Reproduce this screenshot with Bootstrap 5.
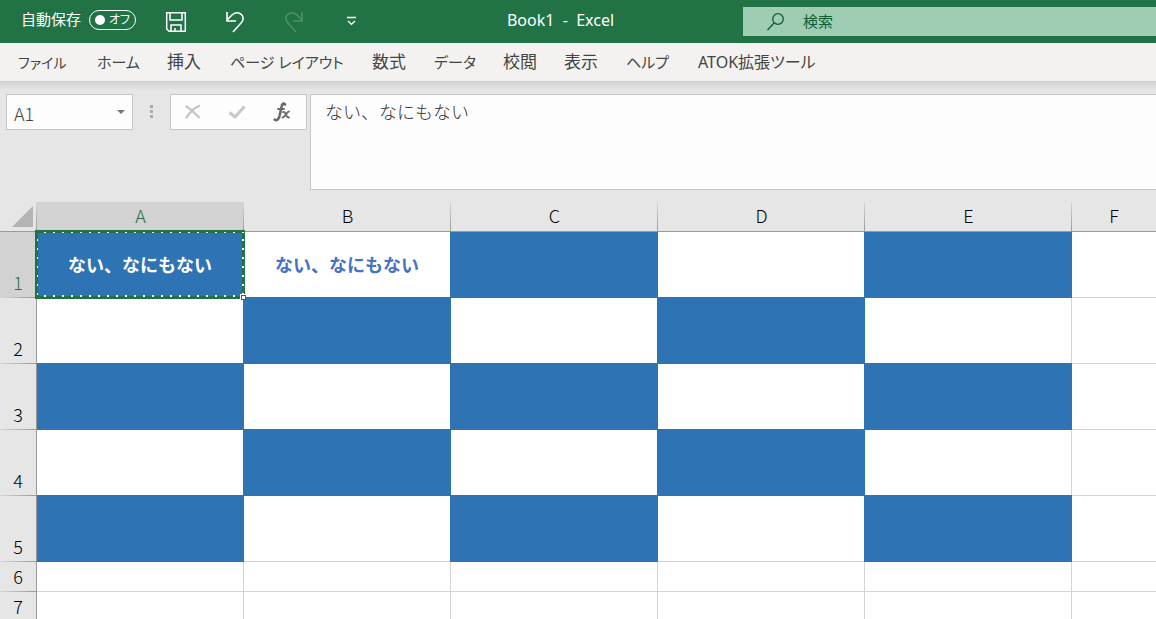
<!DOCTYPE html>
<html lang="ja">
<head>
<meta charset="utf-8">
<meta name="viewport" content="width=device-width, initial-scale=1">
<title>Book1 - Excel</title>
<link href="https://cdn.jsdelivr.net/npm/bootstrap@5.3.0/dist/css/bootstrap.min.css" rel="stylesheet">
<style>
  :root { --xl-green: #217346; --xl-fill: #2e74b5; --xl-chrome: #e6e6e6; --xl-line: #c6c6c6; --xl-edge: #999; }
  body { font-family: "Noto Sans", "Noto Sans CJK JP", sans-serif; background: var(--xl-chrome); color: #444; }
  .titlebar { height: 43px; background: var(--xl-green); color: #fff; font-size: 15px; }
  .autosave { width: 146px; padding-left: 21px; gap: 8px; }
  .autosave .switch-track { width: 47px; height: 20px; border: 1px solid #fff; border-radius: 10px; font-size: 12px; padding: 0 5px; font-feature-settings: "palt"; cursor: pointer; }
  .switch-knob { width: 10px; height: 10px; border-radius: 50%; background: #fff; }
  .quick button { width: 59px; height: 40px; }
  .doc-title { white-space: pre; font-size: 16px; }
  .search { width: 413px; height: 29px; background: #9fcdb3; color: #0e5c2f; }
  .search input { background: transparent; color: inherit; font-size: 15px; font-family: inherit; outline: 0; }
  .search input::placeholder { color: inherit; opacity: 1; }
  .ribbon { height: 38px; background: #f3f2f1; padding-left: 18px; display: grid; grid-template-columns: 79px 70px 63px 142px 62px 69px 61px 62px 72px auto; align-items: center; font-size: 17px; }
  .ribbon a { color: #444; text-decoration: none; white-space: nowrap; font-feature-settings: "palt"; }
  .ribbon .kana { font-size: 15px; }
  .ribbon .kana-small { font-size: 14px; }
  .ribbon .mixed { font-size: 16px; }
  .formula { height: 121px; padding: 13px 0 12px 6px; background: linear-gradient(#cecece, var(--xl-chrome) 9px); }
  .formula > * { border: 1px solid var(--xl-line); background: #fdfdfd; }
  .name-box { width: 127px; height: 36px; }
  .name-box input { font-size: 18px; font-weight: 300; padding: 3px 0 0 7px; color: #444; font-family: "Noto Sans CJK JP", sans-serif; outline: 0; background: transparent; }
  .name-box button { width: 22px; }
  .formula .grip { width: 37px; height: 36px; border: 0; background: transparent; }
  .fx-box { width: 137px; height: 36px; margin-right: 3px; padding: 0 2px 3px 0; }
  .formula textarea { height: 96px; border-right: 0; padding: 3px 14px; font: 300 18px/26px "Noto Sans CJK JP", sans-serif; color: #333; resize: none; outline: 0; }
  .sheet { table-layout: fixed; width: 100%; border-collapse: separate; border-spacing: 0; font-family: "Noto Sans CJK JP", sans-serif; background: #fff; }
  .sheet th, .sheet td { padding: 0; text-align: center; }
  .sheet th { position: relative; z-index: 1; font-weight: 300; font-size: 18px; line-height: 24px; color: #000; background: var(--xl-chrome); }
  .sheet thead th { height: 30px; padding-bottom: 4px; border-bottom: 1px solid var(--xl-edge); background: linear-gradient(#d6d6d6, var(--xl-edge)) right / 1px 100% no-repeat var(--xl-chrome); }
  .sheet tbody th { height: 66px; border-right: 1px solid var(--xl-edge); vertical-align: bottom; padding-bottom: 4px; background: linear-gradient(90deg, #d6d6d6, var(--xl-edge)) bottom / 100% 1px no-repeat var(--xl-chrome); }
  .sheet thead th:first-child { padding-bottom: 0; }
  .sheet tbody .short th { height: 30px; }
  .sheet tbody .picked, .sheet thead .picked { background-color: #d2d2d2; color: var(--xl-green); }
  .sheet td { border-right: 1px solid #d4d4d4; border-bottom: 1px solid #d4d4d4; font-size: 18px; font-weight: 700; color: #4472c4; white-space: nowrap; }
  .sheet td:last-child { border-right: 0; }
  .sheet thead th:last-child { background: var(--xl-chrome); }
  .sheet td.filled { background: var(--xl-fill); border-color: var(--xl-fill); box-shadow: -1px -1px var(--xl-fill), -1px 0 var(--xl-fill), 0 -1px var(--xl-fill); }
  .sheet .active-cell { position: relative; z-index: 2; color: #fff; }
  .ants { position: absolute; inset: -2px; border: 3px solid var(--xl-green); pointer-events: none; }
  .ants::before { content: ""; position: absolute; inset: -1px -2px -1px -1px;
    background:
      repeating-linear-gradient(90deg, transparent 0 7px, #fff 7px 9px) top / 100% 1px no-repeat,
      repeating-linear-gradient(90deg, transparent 0 7px, #fff 7px 9px) bottom / 100% 2px no-repeat,
      repeating-linear-gradient(transparent 0 7px, #fff 7px 9px) left / 1px 100% no-repeat,
      repeating-linear-gradient(transparent 0 7px, #fff 7px 9px) right / 2px 100% no-repeat; }
  .ants::after { content: ""; position: absolute; right: -4px; bottom: -4px; width: 5px; height: 5px; background: #fff; border: 1px solid var(--xl-green); box-shadow: -1px -1px #fff; }
</style>
</head>
<body class="vh-100 overflow-hidden">
<header>
  <div class="titlebar d-flex align-items-center">
    <div class="autosave d-flex align-items-center flex-shrink-0 pb-1">
      <label for="autosave" class="text-nowrap">自動保存</label>
      <input type="checkbox" id="autosave" class="visually-hidden">
      <label for="autosave" class="switch-track d-flex align-items-center justify-content-between"><span class="switch-knob"></span>オフ</label>
    </div>
    <div class="quick d-flex flex-shrink-0">
      <button class="btn p-0 border-0" aria-label="上書き保存"><svg width="22" height="22" viewBox="0 0 22 22" fill="none" stroke="#fff" stroke-width="1.5"><path d="M1.7.7h18.6v18.6H4L1.7 17zM5 1v7h12V1M6 19v-6h10v6M10 19v-3"/></svg></button>
      <button class="btn p-0 border-0" aria-label="元に戻す"><svg width="20" height="22" viewBox="0 0 20 22" fill="none" stroke="#fff" stroke-width="1.6"><path d="M2 0v9h9M2 8l5-5c7-6 15 2 9 8l-8 9"/></svg></button>
      <button class="btn p-0 border-0" aria-label="やり直し"><svg width="20" height="22" viewBox="0 0 20 22" fill="none" stroke="#4d9068" stroke-width="1.6"><path d="M18 0v9H9M18 8l-5-5C6-3-2 5 4 11l8 9"/></svg></button>
      <button class="btn p-0 border-0" aria-label="カスタマイズ"><svg width="12" height="14" viewBox="0 0 12 14" fill="none" stroke="#fff" stroke-width="1.300"><path d="M0 1.500h9M1 5l3.500 3.300L8 5"/></svg></button>
    </div>
    <div class="doc-title flex-grow-1 text-center pb-1 pe-1">Book1  -  Excel</div>
    <div class="search d-flex align-items-center flex-shrink-0">
      <svg class="ms-4 me-3 flex-shrink-0" width="18" height="18" viewBox="0 0 18 18" fill="none" stroke="#0e5c2f" stroke-width="1.3"><circle cx="11" cy="6" r="5.300"/><path d="M7 10 .500 17"/></svg>
      <input class="border-0 flex-grow-1" type="search" placeholder="検索" aria-label="検索">
    </div>
  </div>
  <nav class="ribbon" aria-label="リボン">
    <a href="#" class="kana-small">ファイル</a><a href="#" class="kana">ホーム</a><a href="#">挿入</a><a href="#" class="kana">ページ レイアウト</a><a href="#">数式</a><a href="#" class="kana">データ</a><a href="#">校閲</a><a href="#">表示</a><a href="#" class="kana">ヘルプ</a><a href="#" class="mixed">ATOK拡張ツール</a>
  </nav>
</header>
<main>
  <div class="formula d-flex align-items-start">
    <div class="name-box d-flex flex-shrink-0">
      <input class="border-0 flex-grow-1 w-50" value="A1" aria-label="名前ボックス">
      <button class="btn p-0 border-0 d-flex align-items-center justify-content-center" aria-label="名前の一覧"><svg width="8" height="4" viewBox="0 0 8 4"><path d="M0 0h8L4 4z" fill="#777"/></svg></button>
    </div>
    <div class="grip d-flex align-items-center justify-content-center flex-shrink-0"><svg width="3" height="14" viewBox="0 0 3 14" fill="#aaa"><path d="M0 0h3v3H0zM0 5h3v3H0zM0 10h3v3H0z"/></svg></div>
    <div class="fx-box d-flex align-items-center justify-content-around flex-shrink-0">
      <button class="btn p-0 border-0" aria-label="キャンセル"><svg width="18" height="16" viewBox="0 0 18 16" fill="none" stroke="#c4c4c4" stroke-width="2.200"><path d="M1.500 2c6 3 10 8 14 12M16 1.500C10 4 5 9 2 14.500"/></svg></button>
      <button class="btn p-0 border-0" aria-label="入力"><svg width="18" height="16" viewBox="0 0 18 16" fill="none" stroke="#c8c8c8" stroke-width="3"><path d="M1.500 8.500 7 13 16.500 2.500"/></svg></button>
      <button class="btn p-0 border-0" aria-label="関数の挿入"><svg width="18" height="20" viewBox="0 0 18 20" fill="none" stroke="#6a6a6a" stroke-linecap="round"><path stroke-width="2.600" d="M12 2.500C10.500.500 9 2 8.500 5L6.500 14c-.800 3-2.500 5-4.800 3.700"/><path stroke-width="1.800" d="M5 7h6M10 10c3-1.500 2.500 6 6 5.500M16 9.500c-2 0-4 6-6.500 6"/></svg></button>
    </div>
    <textarea class="flex-grow-1" aria-label="数式バー" spellcheck="false">ない、なにもない</textarea>
  </div>
  <table class="sheet">
    <colgroup><col style="width:37px"><col span="5" style="width:207px"><col></colgroup>
    <thead>
      <tr><th scope="col" aria-label="すべて選択"><svg class="d-block ms-auto me-1" width="21" height="21" viewBox="0 0 21 21"><path d="M21 0v21H0z" fill="#b4b4b4"/></svg></th><th scope="col" class="picked">A</th><th scope="col">B</th><th scope="col">C</th><th scope="col">D</th><th scope="col">E</th><th scope="col">F</th></tr>
    </thead>
    <tbody>
      <tr><th scope="row" class="picked">1</th><td class="filled active-cell">ない、なにもない<span class="ants"></span></td><td>ない、なにもない</td><td class="filled"></td><td></td><td class="filled"></td><td></td></tr>
      <tr><th scope="row">2</th><td></td><td class="filled"></td><td></td><td class="filled"></td><td></td><td></td></tr>
      <tr><th scope="row">3</th><td class="filled"></td><td></td><td class="filled"></td><td></td><td class="filled"></td><td></td></tr>
      <tr><th scope="row">4</th><td></td><td class="filled"></td><td></td><td class="filled"></td><td></td><td></td></tr>
      <tr><th scope="row">5</th><td class="filled"></td><td></td><td class="filled"></td><td></td><td class="filled"></td><td></td></tr>
      <tr class="short"><th scope="row">6</th><td></td><td></td><td></td><td></td><td></td><td></td></tr>
      <tr class="short"><th scope="row">7</th><td></td><td></td><td></td><td></td><td></td><td></td></tr>
    </tbody>
  </table>
</main>
<script src="https://cdn.jsdelivr.net/npm/bootstrap@5.3.0/dist/js/bootstrap.bundle.min.js"></script>
</body>
</html>
